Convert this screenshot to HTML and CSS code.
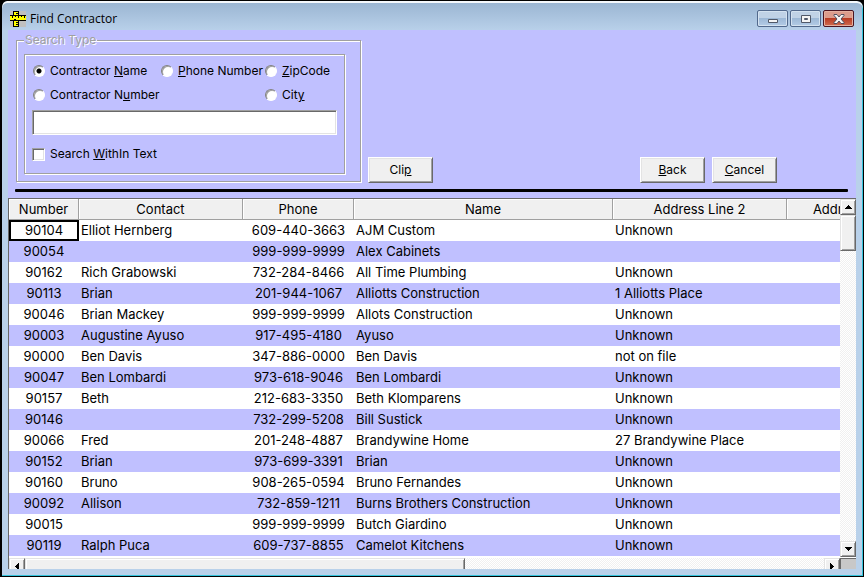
FILE: index.html
```html
<!DOCTYPE html>
<html lang="en">
<head>
<meta charset="utf-8">
<title>Find Contractor</title>
<link rel="stylesheet" href="styles.css">
</head>
<body>
<div class="window">
  <header class="titlebar">
    <svg class="app-icon" width="16" height="16" viewBox="0 0 16 16" shape-rendering="crispEdges" aria-hidden="true">
      <path fill="#c0c0c0" d="M0 0h16v16H0z"/>
      <path fill="#000" d="M3 0h6v16H3zM0 4h16v6H0z"/>
      <path fill="#ff0" d="M4 1h4v3H4zM0 5h16v4H0zM4 10h4v5H4z"/>
      <path fill="#000" d="M6 2h2v1H6zM2 5h1v2H2zM5 5h1v1H5zM8 5h1v2H8zM11 5h1v1h-1zM14 5h1v2h-1zM4 8h2v1H4zM6 11h2v1H6zM6 13h2v1H6z"/>
    </svg>
    <h1 class="title">Find Contractor</h1>
    <div class="window-buttons">
      <button class="winbtn" type="button" aria-label="Minimize"><svg width="12" height="10" viewBox="0 0 12 10"><path d="M1.500 5.500h9v3h-9z" fill="#f4f4f4" stroke="#505868"/></svg></button>
      <button class="winbtn" type="button" aria-label="Maximize"><svg width="12" height="10" viewBox="0 0 12 10"><path d="M1.500 1.500h9v7h-9z" fill="#f4f4f4" stroke="#505868"/><path d="M4.500 4.500h3v1h-3z" fill="#89a5c8" stroke="#505868"/></svg></button>
      <button class="winbtn winbtn-close" type="button" aria-label="Close"><svg width="12" height="10" viewBox="0 0 12 10"><path d="M1 .5h3L6 3 8 .5h3v1L8 5l3 3.500v1H8L6 7 4 9.500H1v-1L4 5 1 1.500z" fill="#f4f4f4" stroke="#505060"/></svg></button>
    </div>
  </header>
  <main class="client">
    <form class="search">
      <fieldset class="group">
        <legend>Search Type</legend>
        <div class="panel">
          <div class="options">
            <label><input type="radio" name="type" checked><span>Contractor <u>N</u>ame</span></label>
            <label><input type="radio" name="type"><span><u>P</u>hone Number</span></label>
            <label><input type="radio" name="type"><span><u>Z</u>ipCode</span></label>
            <label class="wide"><input type="radio" name="type"><span>Contractor N<u>u</u>mber</span></label>
            <label><input type="radio" name="type"><span>Cit<u>y</u></span></label>
          </div>
          <input class="query" type="text" aria-label="Search for">
          <label class="within"><input type="checkbox"><span>Search <u>W</u>ithIn Text</span></label>
        </div>
      </fieldset>
      <button class="btn" type="button"><span>Cli<u>p</u></span></button>
      <div class="actions">
        <button class="btn" type="button"><span><u>B</u>ack</span></button>
        <button class="btn" type="button"><span><u>C</u>ancel</span></button>
      </div>
    </form>
    <hr class="rule">
    <div class="grid">
      <div class="sheet">
        <table>
          <colgroup><col class="c-number"><col class="c-contact"><col class="c-phone"><col class="c-name"><col class="c-addr2"><col class="c-addr"></colgroup>
          <thead><tr><th>Number</th><th>Contact</th><th>Phone</th><th>Name</th><th>Address Line 2</th><th>Address Line 1</th></tr></thead>
          <tbody>
            <tr><td class="current">90104</td><td>Elliot Hernberg</td><td>609-440-3663</td><td>AJM Custom</td><td>Unknown</td><td></td></tr>
            <tr><td>90054</td><td></td><td>999-999-9999</td><td>Alex Cabinets</td><td></td><td></td></tr>
            <tr><td>90162</td><td>Rich Grabowski</td><td>732-284-8466</td><td>All Time Plumbing</td><td>Unknown</td><td></td></tr>
            <tr><td>90113</td><td>Brian</td><td>201-944-1067</td><td>Alliotts Construction</td><td>1 Alliotts Place</td><td></td></tr>
            <tr><td>90046</td><td>Brian Mackey</td><td>999-999-9999</td><td>Allots Construction</td><td>Unknown</td><td></td></tr>
            <tr><td>90003</td><td>Augustine Ayuso</td><td>917-495-4180</td><td>Ayuso</td><td>Unknown</td><td></td></tr>
            <tr><td>90000</td><td>Ben Davis</td><td>347-886-0000</td><td>Ben Davis</td><td>not on file</td><td></td></tr>
            <tr><td>90047</td><td>Ben Lombardi</td><td>973-618-9046</td><td>Ben Lombardi</td><td>Unknown</td><td></td></tr>
            <tr><td>90157</td><td>Beth</td><td>212-683-3350</td><td>Beth Klomparens</td><td>Unknown</td><td></td></tr>
            <tr><td>90146</td><td></td><td>732-299-5208</td><td>Bill Sustick</td><td>Unknown</td><td></td></tr>
            <tr><td>90066</td><td>Fred</td><td>201-248-4887</td><td>Brandywine Home</td><td>27 Brandywine Place</td><td></td></tr>
            <tr><td>90152</td><td>Brian</td><td>973-699-3391</td><td>Brian</td><td>Unknown</td><td></td></tr>
            <tr><td>90160</td><td>Bruno</td><td>908-265-0594</td><td>Bruno Fernandes</td><td>Unknown</td><td></td></tr>
            <tr><td>90092</td><td>Allison</td><td>732-859-1211</td><td>Burns Brothers Construction</td><td>Unknown</td><td></td></tr>
            <tr><td>90015</td><td></td><td>999-999-9999</td><td>Butch Giardino</td><td>Unknown</td><td></td></tr>
            <tr><td>90119</td><td>Ralph Puca</td><td>609-737-8855</td><td>Camelot Kitchens</td><td>Unknown</td><td></td></tr>
          </tbody>
        </table>
      </div>
      <div class="vbar">
        <button class="arrow" type="button" aria-label="Scroll up"><svg width="7" height="4" viewBox="0 0 7 4" shape-rendering="crispEdges"><path d="M3 0h1v1h1v1h1v1h1v1H0V3h1V2h1V1h1z"/></svg></button>
        <div class="vthumb"></div>
        <button class="arrow arrow-end" type="button" aria-label="Scroll down"><svg width="7" height="4" viewBox="0 0 7 4" shape-rendering="crispEdges"><path d="M0 0h7v1H6v1H5v1H4v1H3V3H2V2H1V1H0z"/></svg></button>
      </div>
      <div class="hbar">
        <button class="arrow" type="button" aria-label="Scroll left"><svg width="4" height="7" viewBox="0 0 4 7" shape-rendering="crispEdges"><path d="M4 0v7H3V6H2V5H1V4H0V3h1V2h1V1h1V0z"/></svg></button>
        <div class="hthumb"></div>
        <button class="arrow arrow-end" type="button" aria-label="Scroll right"><svg width="4" height="7" viewBox="0 0 4 7" shape-rendering="crispEdges"><path d="M0 0v7h1V6h1V5h1V4h1V3H3V2H2V1H1V0z"/></svg></button>
      </div>
      <div class="corner"></div>
    </div>
  </main>
</div>
</body>
</html>
```
FILE: styles.css
```css
* { box-sizing: border-box; }

body {
  margin: 0;
  background: #000;
  color: #000;
  font: 12px/16px "Comic Sans MS", Inter, sans-serif;
}

.window {
  min-height: 100vh;
  display: flex;
  flex-direction: column;
  padding: 0 7px 7px 6px;
  border: 1px solid #000;
  border-left-width: 2px;
  border-radius: 7px 7px 0 0;
  background: linear-gradient(#99b4d1, #b9d1ea 30px);
  box-shadow: inset 0 2px #f4f8fc, inset -1px -1px #34c4dc;
}

.titlebar {
  display: flex;
  align-items: center;
  gap: 4px;
  height: 29px;
  padding: 6px 2px 0;
}

.title {
  flex: 1;
  margin: 0;
  font: 12px/16px "Open Sans", sans-serif;
}

.window-buttons { display: flex; gap: 2px; }

.winbtn {
  display: flex;
  align-items: center;
  justify-content: center;
  width: 31px;
  height: 17px;
  padding: 0;
  border: 1px solid #52698c;
  border-radius: 2px;
  background: linear-gradient(#c0d2e6 50%, #9db8d6 50%, #b4cce6);
  box-shadow: inset 0 0 0 1px #d4e2f0;
}

.winbtn-close {
  border-color: #4a1420;
  background: linear-gradient(#dc9c8c 50%, #b83c24 50%, #d06c50);
  box-shadow: inset 0 0 0 1px #e4b0a0;
}

.client {
  flex: 1;
  display: flex;
  flex-direction: column;
  background: #c0c0ff;
}

.search {
  display: flex;
  align-items: flex-end;
  gap: 7px;
  padding: 3px 8px 0;
}

.group, .panel {
  border: 1px solid #a0a0a0;
  box-shadow: 1px 1px #fff, inset 1px 1px #fff;
}

.group {
  width: 345px;
  margin: 0 0 1px;
  padding: 7px 15px 7px 7px;
}

.group legend {
  padding: 0 1px;
  background: #c0c0ff;
  color: #a0a0a0;
  line-height: 14px;
  text-shadow: 1px 1px #fff;
}

.panel { padding: 8px 7px 11px; }

.options {
  display: grid;
  grid-template-columns: 128px 104px 1fr;
  row-gap: 8px;
  padding-left: 1px;
}

.wide { grid-column: span 2; }

label {
  display: flex;
  align-items: center;
  gap: 5px;
  white-space: nowrap;
}

input { appearance: none; margin: 0; background: #fff; }

input[type="radio"] {
  flex: none;
  width: 12px;
  height: 12px;
  border: 1px solid;
  border-color: #808080 #fff #fff #808080;
  border-radius: 50%;
  box-shadow: inset 1px 1px #a0a0a0;
}

input[type="radio"]:checked {
  background: radial-gradient(circle, #000 2px, #fff 3px);
}

input[type="checkbox"], .query {
  border: 1px solid;
  border-color: #a0a0a0 #fff #fff #a0a0a0;
  box-shadow: inset 1px 1px #696969, inset -1px -1px #e3e3e3;
}

input[type="checkbox"] { width: 13px; height: 13px; }

.query {
  display: block;
  width: 100%;
  height: 25px;
  margin: 7px 0 11px;
  padding: 0 4px;
  font: inherit;
}

.btn {
  width: 65px;
  height: 26px;
  padding: 0;
  border: 1px solid;
  border-color: #fff #696969 #696969 #fff;
  background: #f0f0f0;
  box-shadow: inset 1px 1px #e3e3e3, inset -1px -1px #a0a0a0;
  color: #000;
  font: inherit;
}

.actions {
  display: flex;
  gap: 7px;
  margin: 0 71px 0 auto;
}

.rule {
  width: calc(100% - 15px);
  height: 3px;
  margin: 6px 8px 6px 7px;
  border: 0;
  border-radius: 1px;
  background: #000;
}

.grid {
  flex: 1;
  display: grid;
  grid-template: 1fr 12px / minmax(0, 1fr) 16px;
  border-top: 1px solid #696969;
  border-left: 1px solid #696969;
  background: #fff;
}

.sheet { overflow: hidden; font-size: 13px; }

table {
  width: 920px;
  border-collapse: separate;
  border-spacing: 0;
  table-layout: fixed;
}

.c-number { width: 70px; }
.c-contact { width: 164px; }
.c-phone { width: 111px; }
.c-name { width: 259px; }
.c-addr2 { width: 174px; }

th, td {
  height: 21px;
  padding: 0 2px;
  line-height: 19px;
  text-align: left;
  white-space: nowrap;
}

th {
  border-right: 1px solid #a0a0a0;
  border-bottom: 1px solid #a0a0a0;
  background: #f0f0f0;
  box-shadow: inset 1px 1px #fff;
  font-weight: normal;
  text-align: center;
}

td:nth-child(1), td:nth-child(3) { text-align: center; }

tbody tr:nth-child(even) { background: #c0c0ff; }

.current { box-shadow: inset 0 0 0 2px #000; }

.vbar, .hbar {
  display: flex;
  background: repeating-conic-gradient(#fff 0 25%, #f0f0f0 0 50%) 0 0 / 2px 2px;
}

.vbar { flex-direction: column; }

.hbar { margin-top: 1px; overflow: hidden; }

.arrow, .vthumb, .hthumb {
  border: 1px solid;
  border-color: #e3e3e3 #696969 #696969 #e3e3e3;
  background: #f0f0f0;
  box-shadow: inset 1px 1px #fff, inset -1px -1px #a0a0a0;
}

.arrow {
  display: flex;
  flex: none;
  align-items: center;
  justify-content: center;
  width: 16px;
  height: 16px;
  padding: 0;
}

.arrow-end { margin: auto 0 0; }

.hbar .arrow-end { margin: 0 0 0 auto; }

.vthumb { height: 36px; }

.hthumb { width: 53%; height: 16px; }

.corner {
  margin-top: 1px;
  border-top: 1px solid #696969;
  border-left: 1px solid #696969;
  background: #c8c8c8;
}
```
